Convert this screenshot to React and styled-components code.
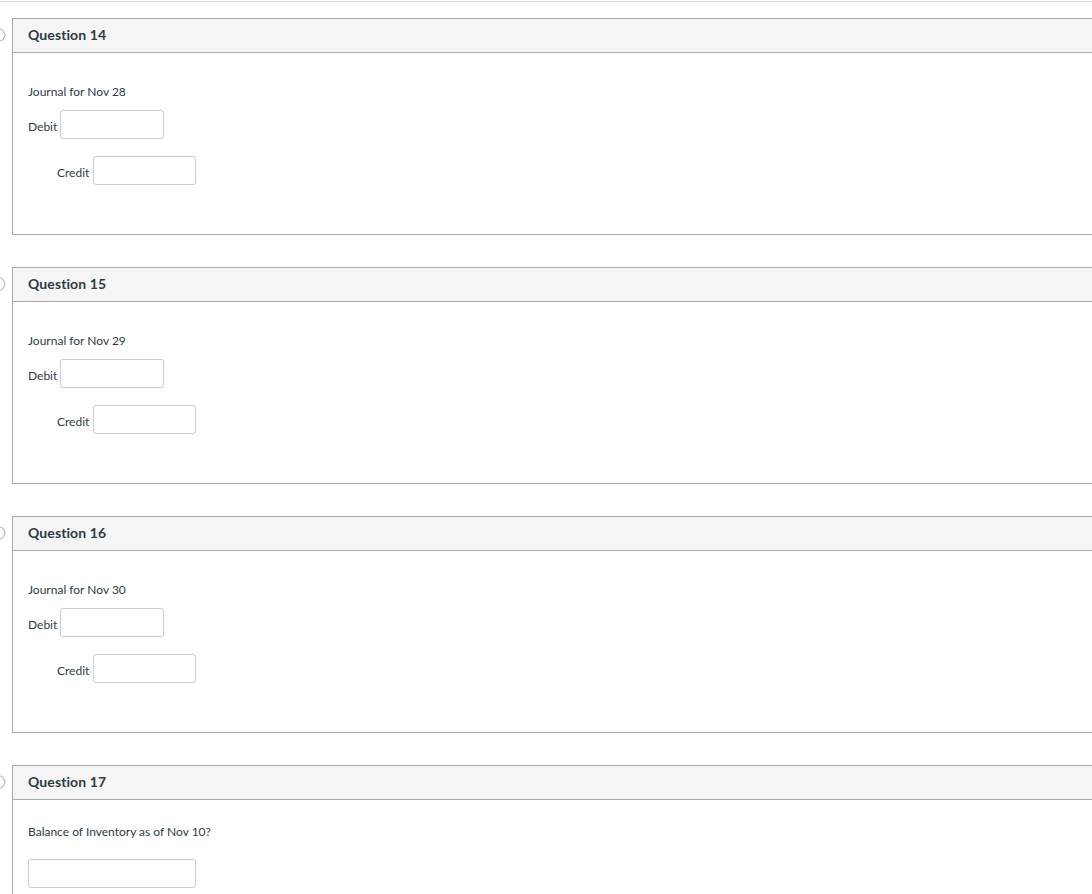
import styled, { createGlobalStyle } from "styled-components";

const GlobalStyle = createGlobalStyle`
  html, body {
    margin: 0;
    padding: 0;
    background: #fff;
    overflow-x: hidden;
    font-family: Lato, "Liberation Sans", sans-serif;
    color: #2d3b45;
  }
`;

const Page = styled.div`
  padding-top: 1px;
`;

const TopRule = styled.div`
  height: 1px;
  background: #dddddd;
  margin-bottom: 16px;
`;

const List = styled.div`
  display: flex;
  flex-direction: column;
  gap: 32px;
`;

const Card = styled.div`
  position: relative;
  margin-left: 12px;
  width: 1100px;
  height: ${(p) => p.$height}px;
  box-sizing: border-box;
  border: 1px solid #aaaaaa;
  background: #fff;
`;

const FlagMark = styled.svg`
  position: absolute;
  left: -26px;
  top: 8px;
`;

const Header = styled.div`
  height: 34px;
  box-sizing: border-box;
  padding: 0 0 2px 15px;
  display: flex;
  align-items: center;
  background: #f5f5f5;
  border-bottom: 1px solid #aaaaaa;
  font-size: 14px;
  font-weight: 700;
  letter-spacing: 0.1px;
  color: #2d3b45;
`;

const Body = styled.div`
  padding: ${(p) => p.$top}px 15px 0;
  display: flex;
  flex-direction: column;
  align-items: flex-start;
`;

const Prompt = styled.p`
  margin: 0 0 ${(p) => p.$gap}px;
  font-size: 12px;
  line-height: 18px;
`;

const Row = styled.label`
  display: flex;
  align-items: center;
  gap: ${(p) => p.$gap || 3}px;
  margin-left: ${(p) => p.$indent || 0}px;
  margin-bottom: 17px;
  font-size: 12px;
`;

const Caption = styled.span`
  padding-top: 4px;
`;

const Field = styled.input`
  box-sizing: border-box;
  width: ${(p) => p.$width}px;
  height: 29px;
  border: 1px solid #c7cdd1;
  border-radius: 3px;
  background: #fff;
  padding: 0 6px;
  font: inherit;
`;

const Flag = () => (
  <FlagMark width="20" height="16" viewBox="0 0 20 16">
    <path
      d="M1 2 H13 Q15 2 16.2 4 L17.6 6.8 Q18.2 8 17.6 9.2 L16.2 12 Q15 14 13 14 H1"
      fill="none"
      stroke="#a9bccb"
      strokeWidth="1.2"
    />
  </FlagMark>
);

const journals = [
  { n: 14, day: 28 },
  { n: 15, day: 29 },
  { n: 16, day: 30 },
];

const App = () => {
  return (
    <Page>
      <GlobalStyle />
      <TopRule />
      <List>
        {journals.map((q) => (
          <Card key={q.n} $height={217}>
            <Flag />
            <Header>Question {q.n}</Header>
            <Body $top={30}>
              <Prompt $gap={9}>Journal for Nov {q.day}</Prompt>
              <Row>
                <Caption>Debit</Caption>
                <Field $width={104} />
              </Row>
              <Row $indent={29} $gap={4}>
                <Caption>Credit</Caption>
                <Field $width={103} />
              </Row>
            </Body>
          </Card>
        ))}
        <Card $height={200}>
          <Flag />
          <Header>Question 17</Header>
          <Body $top={23}>
            <Prompt $gap={18}>Balance of Inventory as of Nov 10?</Prompt>
            <Field $width={168} />
          </Body>
        </Card>
      </List>
    </Page>
  );
};

export default App;
